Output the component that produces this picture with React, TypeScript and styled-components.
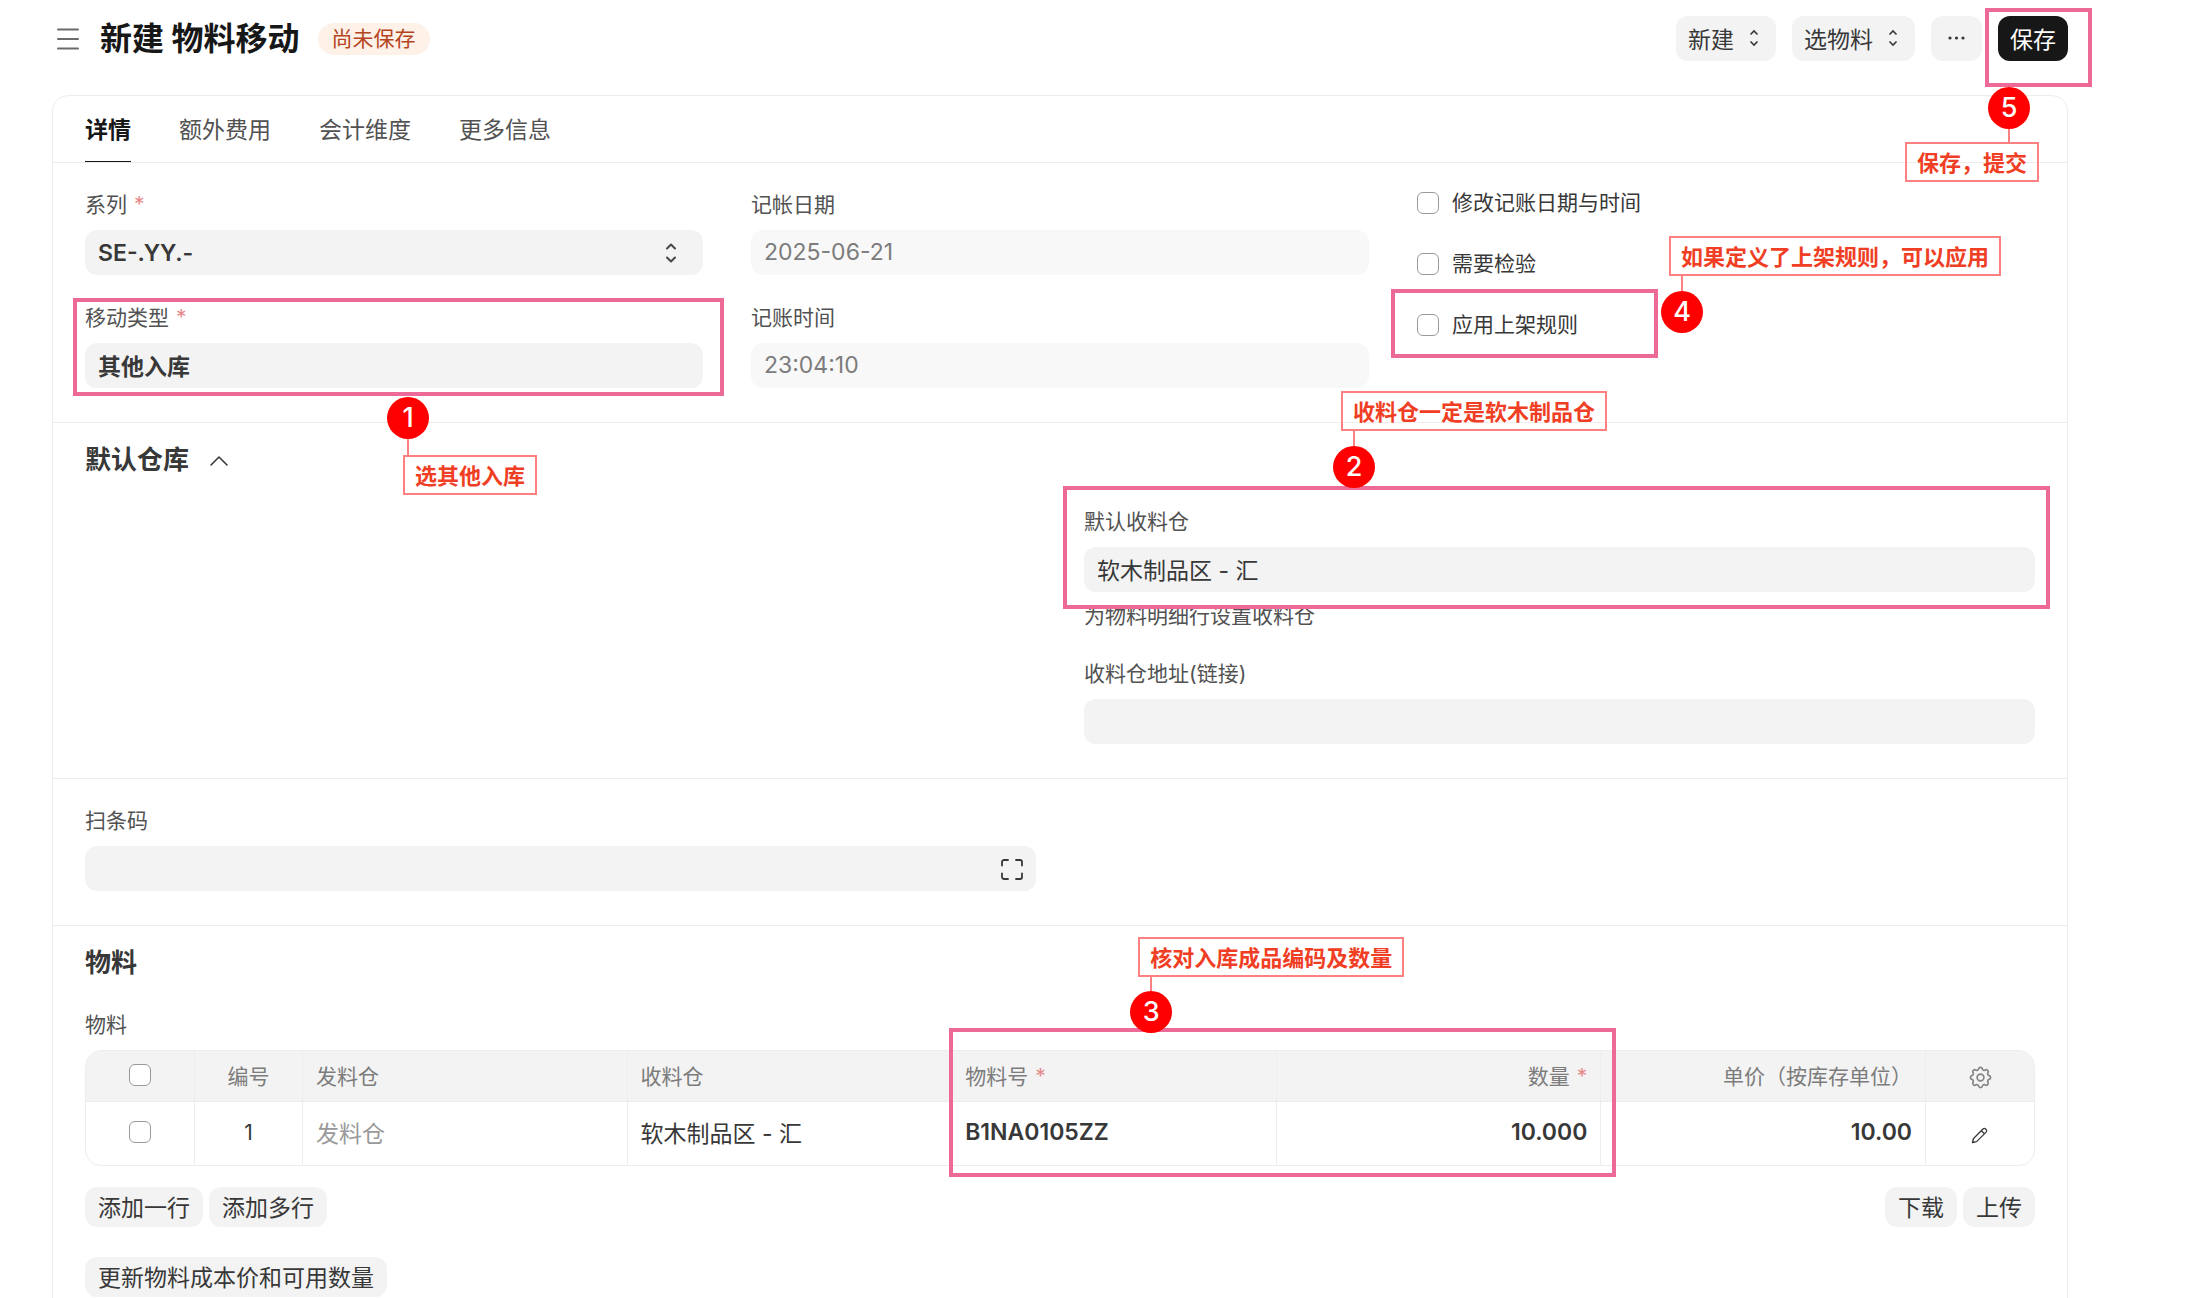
import React from "react";
import styled, { createGlobalStyle } from "styled-components";
import { TbSettings } from "react-icons/tb";

const GlobalStyle = createGlobalStyle`
  *, *::before, *::after { box-sizing: border-box; }
  body {
    margin: 0;
    background: #fff;
    color: #383838;
    font-family: Inter, "Noto Sans CJK SC", sans-serif;
    font-size: 23px;
  }
  button, input, select { font: inherit; color: inherit; }
`;

/* ---------- page frame ---------- */

const Page = styled.main`
  height: 100vh;
  overflow: hidden;
  padding: 0 128px 0 52px;
`;

const Header = styled.header`
  display: flex;
  align-items: center;
  height: 77px;
  margin-bottom: 18px;
  padding-left: 4px;
`;

const MenuButton = styled.button`
  display: flex;
  padding: 0;
  margin-right: 20px;
  border: 0;
  background: none;
`;

const Title = styled.h1`
  margin: 0 18px 0 0;
  color: #171717;
  font-size: 32px;
  line-height: 40px;
  font-weight: 700;
`;

const Badge = styled.span`
  padding: 0 14px;
  border-radius: 16px;
  background: #fdf1e8;
  color: #b54520;
  font-size: 21px;
  line-height: 32px;
`;

const HeaderActions = styled.div`
  display: flex;
  gap: 16px;
  margin-left: auto;
`;

const ActionButton = styled.button<{ $primary?: boolean; $menu?: boolean }>`
  display: flex;
  align-items: center;
  gap: 12px;
  height: 45px;
  padding: 0 ${(p) => (p.$menu ? 14 : 12)}px 2px 12px;
  border: 0;
  border-radius: 12px;
  background: ${(p) => (p.$primary ? "#171717" : "#f3f3f3")};
  color: ${(p) => (p.$primary ? "#fff" : "#383838")};
`;

const Card = styled.div`
  min-height: 100vh;
  border: 1px solid #ededed;
  border-radius: 16px;
`;

const Tabs = styled.nav`
  display: flex;
  gap: 48px;
  height: 67px;
  padding: 0 32px;
  border-bottom: 1px solid #ededed;
`;

const Tab = styled.a<{ $active?: boolean }>`
  display: flex;
  align-items: center;
  padding-bottom: 2px;
  border-bottom: 1px solid ${(p) => (p.$active ? "#171717" : "transparent")};
  color: ${(p) => (p.$active ? "#171717" : "#525252")};
  font-weight: ${(p) => (p.$active ? 600 : 400)};
  text-decoration: none;
`;

/* ---------- form ---------- */

const Section = styled.section<{ $titled?: boolean }>`
  padding: ${(p) => (p.$titled ? 20 : 27)}px 32px 34px;
  border-bottom: 1px solid #ededed;

  &:last-child { border-bottom: 0; }
`;

const SectionTitle = styled.h2`
  display: flex;
  align-items: center;
  gap: 20px;
  margin: 0 0 30px;
  font-size: 26px;
  line-height: 34px;
  font-weight: 600;
`;

const Columns = styled.div<{ $count: number }>`
  display: grid;
  grid-template-columns: repeat(${(p) => p.$count}, minmax(0, 1fr));
  gap: 48px;
`;

const Column = styled.div`
  display: flex;
  flex-direction: column;
  gap: 28px;
`;

/* Positioning context for the guide marks of the thing it holds. */
const Anchor = styled.div`
  position: relative;
`;

const Label = styled.label`
  display: block;
  margin-bottom: 10px;
  color: #525252;
  font-size: 21px;
  line-height: 30px;
`;

const Star = styled.span`
  margin-left: 7px;
  color: #e58a8a;
`;

const Control = styled.div`
  position: relative;
  display: flex;
`;

const Input = styled.input`
  width: 100%;
  height: 45px;
  padding: 0 13px 2px;
  border: 0;
  border-radius: 12px;
  outline: 0;
  background: #f3f3f3;
  font-weight: ${(p) => (p.required ? 600 : 400)};

  &:disabled {
    background: #f8f8f8;
    color: #7c7c7c;
  }
`;

const Select = styled.select`
  width: 100%;
  height: 45px;
  padding: 0 13px;
  border: 0;
  border-radius: 12px;
  appearance: none;
  background: #f3f3f3;
  font-weight: 600;
`;

const ControlIcon = styled.span<{ $right: number }>`
  position: absolute;
  top: 0;
  right: ${(p) => p.$right}px;
  display: flex;
  align-items: center;
  height: 100%;
  pointer-events: none;
`;

const Description = styled.p`
  margin: 0;
  padding-top: 9px;
  color: #525252;
  font-size: 21px;
  line-height: 30px;
`;

const CheckList = styled.div`
  display: flex;
  flex-direction: column;
  gap: 35px;
`;

const CheckRow = styled.label`
  display: flex;
  align-items: center;
  gap: 13px;
  font-size: 21px;
  line-height: 26px;
`;

const Checkbox = styled.input.attrs({ type: "checkbox" })`
  display: block;
  width: 22px;
  height: 22px;
  margin: 0;
  border: 1px solid #999;
  border-radius: 6px;
  appearance: none;
  background: #fff;
`;

/* ---------- item table ---------- */

const Table = styled.table`
  width: 100%;
  border: 1px solid #ededed;
  border-radius: 16px;
  border-spacing: 0;
  overflow: hidden;
  table-layout: fixed;

  th, td {
    padding: 0 13px 3px;
    border-right: 1px solid #ededed;
    white-space: nowrap;
  }
  th:last-child, td:last-child { border-right: 0; }

  ${Checkbox} { margin: 0 auto; }
`;

const HeadCell = styled.th<{ $align?: string; $width?: number }>`
  width: ${(p) => (p.$width ? `${p.$width}px` : "auto")};
  height: 51px;
  border-bottom: 1px solid #ededed;
  background: #f3f3f3;
  color: #7c7c7c;
  font-size: 21px;
  font-weight: 400;
  text-align: ${(p) => p.$align ?? "left"};
`;

const Cell = styled.td<{ $align?: string; $strong?: boolean; $muted?: boolean }>`
  height: 63px;
  color: ${(p) => (p.$muted ? "#999" : "#383838")};
  font-weight: ${(p) => (p.$strong ? 600 : 400)};
  text-align: ${(p) => p.$align ?? "left"};
`;

const RowNumber = styled.span`
  font-size: 21px;
`;

const IconButton = styled.button`
  display: flex;
  margin: 0 auto;
  padding: 6px 0 0;
  border: 0;
  background: none;
`;

const ButtonRow = styled.div`
  display: flex;
  gap: 6px;
  margin-top: 21px;

  & + & { margin-top: 30px; }
`;

const SmallButton = styled.button`
  height: 40px;
  padding: 0 13px 2px;
  border: 0;
  border-radius: 12px;
  background: #f3f3f3;
`;

const Spacer = styled.span`
  flex: 1;
`;

/* ---------- guide marks laid over the form ---------- */

const Highlight = styled.div<{ $inset: string }>`
  position: absolute;
  z-index: 1;
  inset: ${(p) => p.$inset};
  border: 4px solid #ed6a98;
  pointer-events: none;
`;

const StepMark = styled.div<{ $top: number; $left: string; $textFirst?: boolean }>`
  position: absolute;
  z-index: 2;
  top: ${(p) => p.$top}px;
  left: ${(p) => p.$left};
  display: flex;
  flex-direction: ${(p) => (p.$textFirst ? "column-reverse" : "column")};
  align-items: flex-start;
  width: 42px;
`;

const StepNumber = styled.span`
  width: 42px;
  border-radius: 50%;
  background: #f00;
  color: #fff;
  font-size: 27px;
  line-height: 42px;
  font-weight: 500;
  text-align: center;
`;

const StepLine = styled.span<{ $length: number }>`
  width: 2px;
  height: ${(p) => p.$length}px;
  margin-left: 20px;
  background: #ff8080;
`;

const StepText = styled.span<{ $shift: number }>`
  margin-left: ${(p) => p.$shift}px;
  padding: 2px 10px 0;
  border: 2px solid #ff8080;
  color: #f03e24;
  font-size: 22px;
  line-height: 34px;
  font-weight: 700;
  white-space: nowrap;
  text-shadow: 0 0 2px #fff, 0 0 2px #fff;
`;

interface StepProps {
  number: number;
  text: string;
  top: number;
  left: string;
  line: number;
  shift: number;
  textFirst?: boolean;
}

function Step({ number, text, top, left, line, shift, textFirst }: StepProps) {
  return (
    <StepMark $top={top} $left={left} $textFirst={textFirst}>
      <StepNumber>{number}</StepNumber>
      <StepLine $length={line} />
      <StepText $shift={shift}>{text}</StepText>
    </StepMark>
  );
}

/* ---------- icons ---------- */

const UpDownIcon = () => (
  <svg width="16" height="20" viewBox="0 0 16 20" fill="none" stroke="#383838" strokeWidth="1.6">
    <path d="M4.500 6.500 8 3l3.500 3.500M4.500 13.500 8 17l3.500-3.500" />
  </svg>
);

const SelectIcon = () => (
  <svg width="16" height="22" viewBox="0 0 16 22" fill="none" stroke="#484848" strokeWidth="2" strokeLinecap="round" strokeLinejoin="round">
    <path d="M4 6.500 8 2.500l4 4M4 15.500l4 4 4-4" />
  </svg>
);

const MenuIcon = () => (
  <svg width="24" height="24" viewBox="0 0 24 24" stroke="#6b6b6b" strokeWidth="2" strokeLinecap="round">
    <path d="M2 2.500h20M2 12h20M2 21.500h20" />
  </svg>
);

const DotsIcon = () => (
  <svg width="27" height="16" viewBox="0 0 27 16" fill="#383838">
    <circle cx="7" cy="8" r="1.6" />
    <circle cx="13.5" cy="8" r="1.6" />
    <circle cx="20" cy="8" r="1.6" />
  </svg>
);

const ChevronUp = () => (
  <svg width="20" height="20" viewBox="0 0 20 20" fill="none" stroke="#383838" strokeWidth="1.6" strokeLinecap="round" strokeLinejoin="round">
    <path d="M2 15l8-8 8 8" />
  </svg>
);

const ScanIcon = () => (
  <svg width="22" height="24" viewBox="0 0 22 24" fill="none" stroke="#383838" strokeWidth="1.8" strokeLinecap="round">
    <path d="M1 8.500V5a2 2 0 0 1 2-2h4M15 3h4a2 2 0 0 1 2 2v3.500M21 16.500V20a2 2 0 0 1-2 2h-4M7 22H3a2 2 0 0 1-2-2v-3.500" />
  </svg>
);

const PencilIcon = () => (
  <svg width="18" height="18" viewBox="0 0 18 18" fill="none" stroke="#383838" strokeWidth="1.3" strokeLinejoin="round">
    <path d="M1.500 16.500l1-4L12 3a1.900 1.900 0 0 1 2.600 0l.5.5a1.900 1.900 0 0 1 0 2.600L5.600 15.600zM10.300 4.700l3.100 3.100" />
  </svg>
);

/* ---------- page ---------- */

const TABS = ["详情", "额外费用", "会计维度", "更多信息"];

export default function App() {
  return (
    <>
      <GlobalStyle />
      <Page>
        <Header>
          <MenuButton aria-label="菜单"><MenuIcon /></MenuButton>
          <Title>新建 物料移动</Title>
          <Badge>尚未保存</Badge>
          <HeaderActions>
            <ActionButton $menu>新建<UpDownIcon /></ActionButton>
            <ActionButton $menu>选物料<UpDownIcon /></ActionButton>
            <ActionButton aria-label="更多"><DotsIcon /></ActionButton>
            <Anchor>
              <ActionButton $primary>保存</ActionButton>
              <Highlight $inset="-8px -24px -26px -13px" />
              <Step number={5} text="保存，提交" top={71} left="-10px" line={13} shift={-83} />
            </Anchor>
          </HeaderActions>
        </Header>

        <Card>
          <Tabs>
            {TABS.map((name, i) => (
              <Tab key={name} href="#" $active={i === 0}>{name}</Tab>
            ))}
          </Tabs>

          <Section>
            <Columns $count={3}>
              <Column>
                <div>
                  <Label htmlFor="series">系列<Star>*</Star></Label>
                  <Control>
                    <Select id="series"><option>SE-.YY.-</option></Select>
                    <ControlIcon $right={24}><SelectIcon /></ControlIcon>
                  </Control>
                </div>
                <Anchor>
                  <Label htmlFor="type">移动类型<Star>*</Star></Label>
                  <Control><Input id="type" required defaultValue="其他入库" /></Control>
                  <Highlight $inset="-5px -21px -8px -12px" />
                  <Step number={1} text="选其他入库" top={94} left="302px" line={16} shift={16} />
                </Anchor>
              </Column>
              <Column>
                <div>
                  <Label htmlFor="date">记帐日期</Label>
                  <Control><Input id="date" disabled defaultValue="2025-06-21" /></Control>
                </div>
                <div>
                  <Label htmlFor="time">记账时间</Label>
                  <Control><Input id="time" disabled defaultValue="23:04:10" /></Control>
                </div>
              </Column>
              <CheckList>
                <CheckRow><Checkbox />修改记账日期与时间</CheckRow>
                <CheckRow><Checkbox />需要检验</CheckRow>
                <Anchor>
                  <CheckRow><Checkbox />应用上架规则</CheckRow>
                  <Highlight $inset="-23px calc(100% - 241px) -20px -26px" />
                  <Step number={4} text="如果定义了上架规则，可以应用" top={-76} left="244px" line={15} shift={8} textFirst />
                </Anchor>
              </CheckList>
            </Columns>
          </Section>

          <Section $titled>
            <SectionTitle>默认仓库<ChevronUp /></SectionTitle>
            <Columns $count={2}>
              <Column />
              <Column>
                <div>
                  <Anchor>
                    <Label htmlFor="target">默认收料仓</Label>
                    <Control><Input id="target" defaultValue="软木制品区 - 汇" /></Control>
                    <Highlight $inset="-21px -15px -17px -21px" />
                    <Step number={2} text="收料仓一定是软木制品仓" top={-116} left="249px" line={15} shift={8} textFirst />
                  </Anchor>
                  <Description>为物料明细行设置收料仓</Description>
                </div>
                <div>
                  <Label htmlFor="address">收料仓地址(链接)</Label>
                  <Control><Input id="address" /></Control>
                </div>
              </Column>
            </Columns>
          </Section>

          <Section>
            <Columns $count={2}>
              <div>
                <Label htmlFor="barcode">扫条码</Label>
                <Control>
                  <Input id="barcode" />
                  <ControlIcon $right={13}><ScanIcon /></ControlIcon>
                </Control>
              </div>
            </Columns>
          </Section>

          <Section $titled>
            <SectionTitle>物料</SectionTitle>
            <Label as="div">物料</Label>
            <Anchor>
              <Table>
                <thead>
                  <tr>
                    <HeadCell $width={109}><Checkbox aria-label="全选" /></HeadCell>
                    <HeadCell $width={108} $align="center">编号</HeadCell>
                    <HeadCell>发料仓</HeadCell>
                    <HeadCell>收料仓</HeadCell>
                    <HeadCell>物料号<Star>*</Star></HeadCell>
                    <HeadCell $align="right">数量<Star>*</Star></HeadCell>
                    <HeadCell $align="right">单价（按库存单位）</HeadCell>
                    <HeadCell $width={108}>
                      <IconButton aria-label="设置列"><TbSettings size={27} strokeWidth={1.5} color="#858585" /></IconButton>
                    </HeadCell>
                  </tr>
                </thead>
                <tbody>
                  <tr>
                    <Cell><Checkbox aria-label="选择第 1 行" /></Cell>
                    <Cell $align="center"><RowNumber>1</RowNumber></Cell>
                    <Cell $muted>发料仓</Cell>
                    <Cell>软木制品区 - 汇</Cell>
                    <Cell $strong>B1NA0105ZZ</Cell>
                    <Cell $align="right" $strong>10.000</Cell>
                    <Cell $align="right" $strong>10.00</Cell>
                    <Cell>
                      <IconButton aria-label="编辑"><PencilIcon /></IconButton>
                    </Cell>
                  </tr>
                </tbody>
              </Table>
              <Highlight $inset="-22px calc(94px + (100% - 327px) / 5) -11px calc(215px + (100% - 327px) * 2 / 5)" />
              <Step
                number={3}
                text="核对入库成品编码及数量"
                top={-113}
                left="calc(396px + (100% - 327px) * 2 / 5)"
                line={14}
                shift={8}
                textFirst
              />
            </Anchor>
            <ButtonRow>
              <SmallButton>添加一行</SmallButton>
              <SmallButton>添加多行</SmallButton>
              <Spacer />
              <SmallButton>下载</SmallButton>
              <SmallButton>上传</SmallButton>
            </ButtonRow>
            <ButtonRow>
              <SmallButton>更新物料成本价和可用数量</SmallButton>
            </ButtonRow>
          </Section>
        </Card>
      </Page>
    </>
  );
}
